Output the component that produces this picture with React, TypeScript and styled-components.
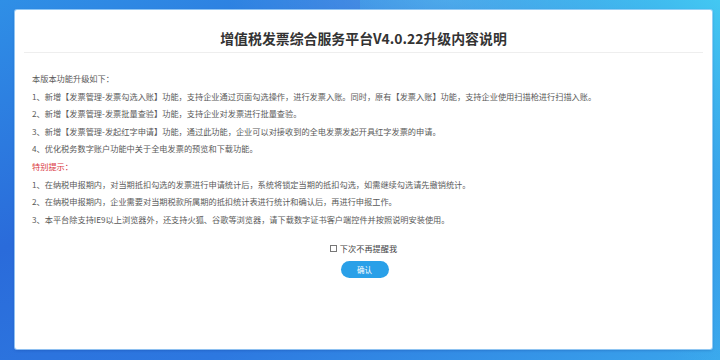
import React from "react";
import styled, { createGlobalStyle } from "styled-components";

const GlobalStyle = createGlobalStyle`
  html, body {
    margin: 0;
    padding: 0;
  }
  body {
    font-family: "Noto Sans CJK SC", "Noto Sans", sans-serif;
  }
`;

const features = [
  "1、新增【发票管理-发票勾选入账】功能，支持企业通过页面勾选操作，进行发票入账。同时，原有【发票入账】功能，支持企业使用扫描枪进行扫描入账。",
  "2、新增【发票管理-发票批量查验】功能，支持企业对发票进行批量查验。",
  "3、新增【发票管理-发起红字申请】功能，通过此功能，企业可以对接收到的全电发票发起开具红字发票的申请。",
  "4、优化税务数字账户功能中关于全电发票的预览和下载功能。",
];

const tips = [
  "1、在纳税申报期内，对当期抵扣勾选的发票进行申请统计后，系统将锁定当期的抵扣勾选，如需继续勾选请先撤销统计。",
  "2、在纳税申报期内，企业需要对当期税款所属期的抵扣统计表进行统计和确认后，再进行申报工作。",
  "3、本平台除支持IE9以上浏览器外，还支持火狐、谷歌等浏览器，请下载数字证书客户端控件并按照说明安装使用。",
];

const App = () => {
  const [checked, setChecked] = React.useState(false);

  return (
    <>
      <GlobalStyle />
      <Page>
        <Card>
          <Header>
            <Title>增值税发票综合服务平台V4.0.22升级内容说明</Title>
          </Header>
          <Content>
            <Line>本版本功能升级如下：</Line>
            {features.map((t) => (
              <Line key={t}>{t}</Line>
            ))}
            <Line red>特别提示：</Line>
            {tips.map((t) => (
              <Line key={t}>{t}</Line>
            ))}
          </Content>
          <Footer>
            <Check onClick={() => setChecked(!checked)}>
              <Box>{checked ? "✓" : ""}</Box>
              下次不再提醒我
            </Check>
            <Confirm>确认</Confirm>
          </Footer>
        </Card>
      </Page>
    </>
  );
};

export default App;

const Page = styled.div`
  width: 720px;
  height: 360px;
  box-sizing: border-box;
  padding: 10px 8px 11px 15px;
  display: flex;
  overflow: hidden;
  background:
    radial-gradient(ellipse 220px 60px at 62% 0%, rgba(255, 255, 255, 0.18), transparent),
    linear-gradient(160deg, #2f8fe6 0%, #2a6bda 40%, #2d78e0 70%, #3aa6ec 100%);
  background-color: #2f7ae0;
  position: relative;

  &::before {
    content: "";
    position: absolute;
    right: 0;
    top: 0;
    width: 360px;
    height: 360px;
    background: linear-gradient(220deg, rgba(70, 210, 245, 0.9) 0%, rgba(70, 200, 245, 0) 60%);
    pointer-events: none;
  }
`;

const Card = styled.div`
  flex: 1;
  background: #fff;
  border-radius: 2px;
  box-shadow: 0 0 0 1px rgba(170, 215, 250, 0.8), 0 1px 3px rgba(0, 40, 120, 0.35);
  display: flex;
  flex-direction: column;
  position: relative;
  z-index: 1;
`;

const Header = styled.div`
  height: 42px;
  margin: 0 9px;
  border-bottom: 1px solid #eeeeee;
  display: flex;
  align-items: center;
  justify-content: center;
`;

const Title = styled.div`
  font-size: 13.9px;
  font-weight: 700;
  color: #333;
  margin-top: 14px;
`;

const Content = styled.div`
  padding: 17px 0 0 17px;
  display: flex;
  flex-direction: column;
`;

const Line = styled.div<{ red?: boolean }>`
  font-size: 8.2px;
  line-height: 17.6px;
  height: 17.6px;
  color: ${(p) => (p.red ? "#d9363e" : "#5a5a5a")};
  white-space: nowrap;
`;

const Footer = styled.div`
  display: flex;
  flex-direction: column;
  align-items: center;
  padding-top: 14px;
  gap: 7px;
`;

const Check = styled.label`
  display: flex;
  align-items: center;
  gap: 3px;
  font-size: 8.2px;
  color: #444;
  cursor: pointer;
`;

const Box = styled.span`
  width: 7px;
  height: 7px;
  border: 1px solid #777;
  box-sizing: border-box;
  font-size: 6px;
  line-height: 5px;
  text-align: center;
`;

const Confirm = styled.button`
  width: 48px;
  height: 17px;
  border: none;
  border-radius: 9px;
  background: #2aa0e8;
  color: #fff;
  font-family: "Noto Sans CJK SC", sans-serif;
  font-size: 7.5px;
  padding: 0;
  margin-left: 2px;
  cursor: pointer;
`;
